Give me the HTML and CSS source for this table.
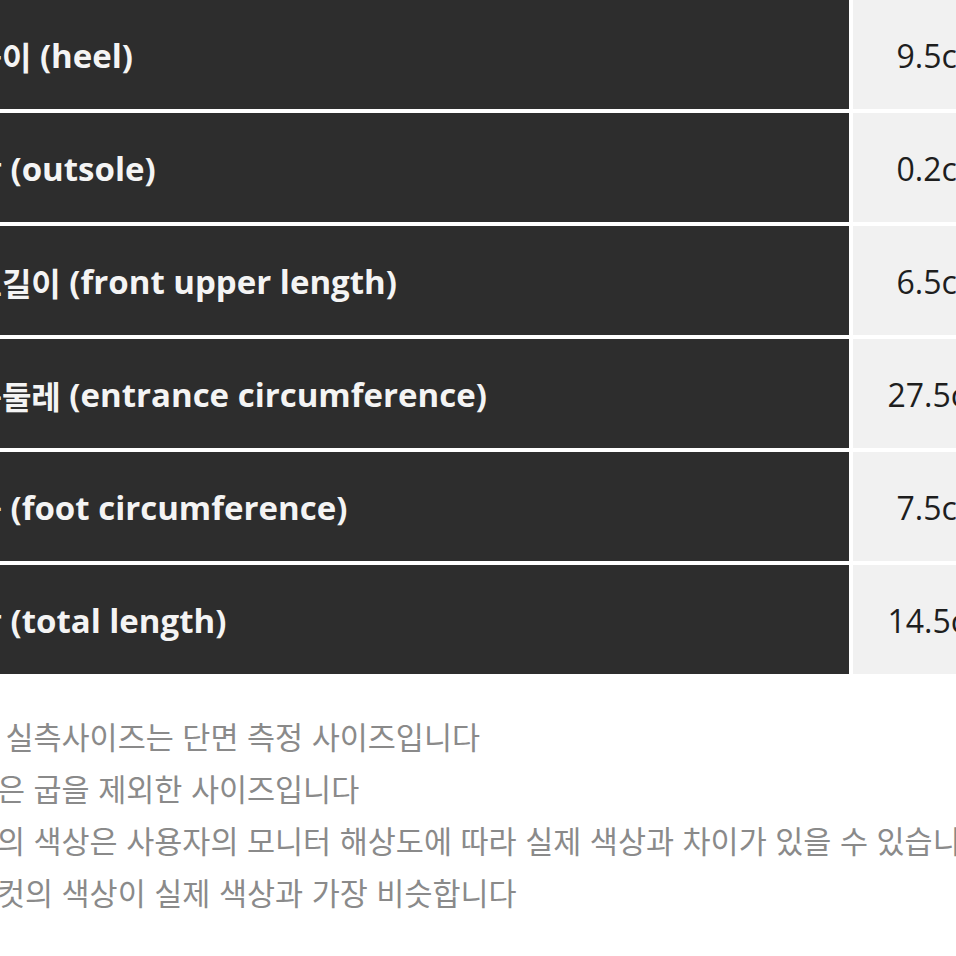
FILE: index.html
```html
<!DOCTYPE html>
<html lang="ko">
<head>
<meta charset="utf-8">
<title>사이즈 정보</title>
<link rel="stylesheet" href="styles.css">
</head>
<body>
<div class="sheet">
  <div class="label"><span class="ko">굽높이</span> (heel)</div><div class="value">9.5cm</div>
  <div class="label"><span class="ko">밑창</span> (outsole)</div><div class="value">0.2cm</div>
  <div class="label"><span class="ko">앞코길이</span> (front upper length)</div><div class="value">6.5cm</div>
  <div class="label"><span class="ko">입구둘레</span> (entrance circumference)</div><div class="value">27.5cm</div>
  <div class="label"><span class="ko">발볼</span> (foot circumference)</div><div class="value">7.5cm</div>
  <div class="label"><span class="ko">총장</span> (total length)</div><div class="value">14.5cm</div>
</div>
<div class="notes">
  <p>* 모든 실측사이즈는 단면 측정 사이즈입니다</p>
  <p>* 총장은 굽을 제외한 사이즈입니다</p>
  <p>* 상품의 색상은 사용자의 모니터 해상도에 따라 실제 색상과 차이가 있을 수 있습니다</p>
  <p>* 착용컷의 색상이 실제 색상과 가장 비슷합니다</p>
</div>
</body>
</html>
```
FILE: styles.css
```css
html, body {
  margin: 0;
  padding: 0;
  background: #ffffff;
  overflow: hidden;
}
body {
  width: 956px;
  height: 956px;
  font-family: "Noto Sans CJK KR", "Noto Sans", sans-serif;
}
.sheet {
  display: grid;
  grid-template-columns: 949px 177px;
  grid-auto-rows: 109px;
  column-gap: 4px;
  row-gap: 4px;
  margin-left: -100px;
  width: max-content;
}
.label {
  background: #2d2d2d;
  color: #f4f4f4;
  font-family: "Open Sans", "Noto Sans CJK KR", sans-serif;
  font-weight: 700;
  font-size: 33px;
  display: flex;
  align-items: center;
  padding-left: 43px;
  padding-top: 2px;
  white-space: pre;
}
.ko {
  font-family: "Noto Sans CJK KR", sans-serif;
  font-size: 32px;
}
.value {
  background: #f1f1f1;
  color: #1e1e1e;
  font-family: "Open Sans", "Noto Sans CJK KR", sans-serif;
  font-size: 32px;
  display: flex;
  align-items: center;
  justify-content: center;
  padding-top: 2px;
  white-space: nowrap;
}
.notes {
  margin-left: -82px;
  padding-top: 36px;
  color: #8a8a8a;
  font-size: 30.5px;
  line-height: 52px;
  white-space: nowrap;
}
.notes p {
  margin: 0;
}
```
